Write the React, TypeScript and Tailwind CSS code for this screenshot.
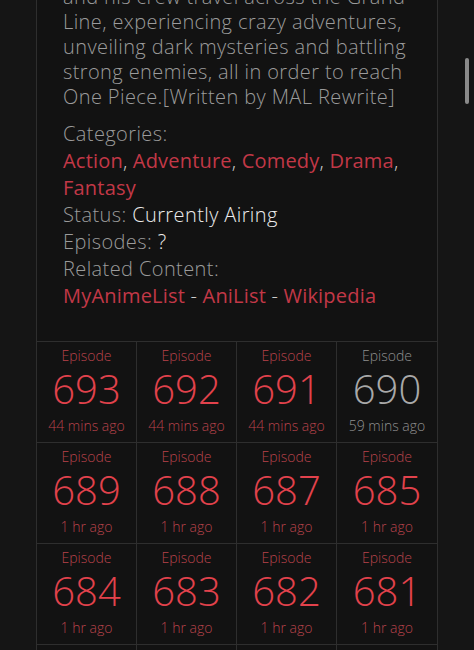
import React from "react";

const episodes = [
  { num: 693, ago: "44 mins ago", seen: false },
  { num: 692, ago: "44 mins ago", seen: false },
  { num: 691, ago: "44 mins ago", seen: false },
  { num: 690, ago: "59 mins ago", seen: true },
  { num: 689, ago: "1 hr ago", seen: false },
  { num: 688, ago: "1 hr ago", seen: false },
  { num: 687, ago: "1 hr ago", seen: false },
  { num: 685, ago: "1 hr ago", seen: false },
  { num: 684, ago: "1 hr ago", seen: false },
  { num: 683, ago: "1 hr ago", seen: false },
  { num: 682, ago: "1 hr ago", seen: false },
  { num: 681, ago: "1 hr ago", seen: false },
  { num: 680, ago: "2 hrs ago", seen: false },
  { num: 679, ago: "2 hrs ago", seen: false },
  { num: 678, ago: "2 hrs ago", seen: false },
  { num: 677, ago: "2 hrs ago", seen: false },
];

const categories = ["Action", "Adventure", "Comedy", "Drama", "Fantasy"];

function EpisodeCell({ num, ago, seen, last }: { num: number; ago: string; seen: boolean; last: boolean }) {
  return (
    <div
      className={`flex h-[101px] flex-col items-center border-b border-[#2e2e2e] pt-[3px] ${last ? "" : "border-r"}`}
    >
      <span className={`text-[14px] leading-[22px] ${seen ? "text-[#8f8f8f]" : "text-[#b8424b]"}`}>Episode</span>
      <span className={`text-[40px] leading-[44px] ${seen ? "text-[#a9a9a9]" : "text-[#e2424c]"}`}>{num}</span>
      <span className={`mt-[4px] text-[14px] leading-[22px] ${seen ? "text-[#8f8f8f]" : "text-[#b8424b]"}`}>{ago}</span>
    </div>
  );
}

export default function App() {
  return (
    <div className="relative h-[650px] overflow-hidden bg-[#151515] font-['Open_Sans',sans-serif] font-light">
      <div className="ml-[36px] w-[402px] border-x border-[#2e2e2e] bg-[#121212]">
        <div className="-mt-[16px] px-[26px] text-[20px] leading-[25px] tracking-[0.02em] text-[#9b9b9b]">
          <p>
            and his crew travel across the Grand Line, experiencing crazy adventures, unveiling dark mysteries and
            battling strong enemies, all in order to reach One Piece.[Written by MAL Rewrite]
          </p>

          <div className="mt-[11px] leading-[27px]">
            <p>Categories:</p>
            <p className="font-normal tracking-[0.01em]">
              {categories.map((c, i) => (
                <span key={c}>
                  <a className="text-[#c23847]">{c}</a>
                  {i < categories.length - 1 && <span className="font-light text-[#cfcfcf]">, </span>}
                </span>
              ))}
            </p>
            <p>
              Status: <span className="text-[#ececec]">Currently Airing</span>
            </p>
            <p>
              Episodes: <span className="text-[#ececec]">?</span>
            </p>
            <p>Related Content:</p>
            <p className="font-normal tracking-[0.01em]">
              <a className="text-[#c23847]">MyAnimeList</a> <span className="font-light text-[#cfcfcf]">-</span>{" "}
              <a className="text-[#c23847]">AniList</a> <span className="font-light text-[#cfcfcf]">-</span>{" "}
              <a className="text-[#c23847]">Wikipedia</a>
            </p>
          </div>
        </div>

        <div className="mt-[32px] grid grid-cols-4 border-t border-[#2e2e2e]">
          {episodes.map((e, i) => (
            <EpisodeCell key={e.num} {...e} last={i % 4 === 3} />
          ))}
        </div>
      </div>

      <div className="absolute right-[5px] top-[58px] h-[46px] w-[4px] rounded-full bg-[#8a8a8a]" />
    </div>
  );
}
